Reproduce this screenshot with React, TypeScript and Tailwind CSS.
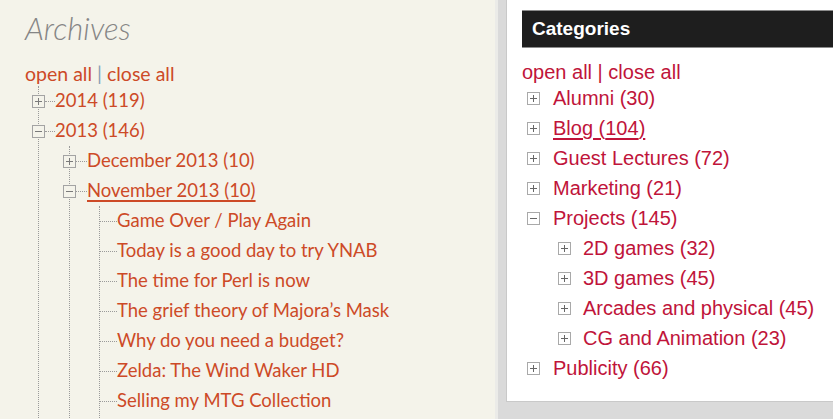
import React from 'react';

const leftLink = 'text-[#cd4a27]';
const rightLink = 'text-[#c0143a]';

const ToggleBox = ({ open, border, sign, bg }: { open?: boolean; border: string; sign: string; bg: string }) => (
  <svg width="13" height="13" viewBox="0 0 13 13" className="shrink-0">
    <rect x="0.5" y="0.5" width="12" height="12" fill={bg} stroke={border} />
    <line x1="3" y1="6.5" x2="10" y2="6.5" stroke={sign} />
    {!open && <line x1="6.5" y1="3" x2="6.5" y2="10" stroke={sign} />}
  </svg>
);

const novemberPosts = [
  'Game Over / Play Again',
  'Today is a good day to try YNAB',
  'The time for Perl is now',
  'The grief theory of Majora’s Mask',
  'Why do you need a budget?',
  'Zelda: The Wind Waker HD',
  'Selling my MTG Collection',
];

const categories = [
  { name: 'Alumni', count: 30 },
  { name: 'Blog', count: 104, hover: true },
  { name: 'Guest Lectures', count: 72 },
  { name: 'Marketing', count: 21 },
  { name: 'Projects', count: 145, open: true },
  { name: '2D games', count: 32, sub: true },
  { name: '3D games', count: 45, sub: true },
  { name: 'Arcades and physical', count: 45, sub: true },
  { name: 'CG and Animation', count: 23, sub: true },
  { name: 'Publicity', count: 66 },
];

const LeftBox = ({ open }: { open?: boolean }) => (
  <ToggleBox open={open} border="#a3a3a3" sign="#7a7a7a" bg="#f4f3ea" />
);

const Archives = () => (
  <div className="w-[495px] shrink-0 bg-[#f4f3ea] pl-[25px] pt-[9px]" style={{ fontFamily: 'Lato, "Open Sans", sans-serif' }}>
    <h2 className="text-[31px] leading-[38px] font-light italic text-[#858585]">Archives</h2>
    <div className={`mt-[15px] text-[19.5px] leading-[24px] ${leftLink}`}>
      open all <span className="text-[#8aa0b4]">|</span> close all
    </div>
    <ul className="ml-[13px] border-l border-dotted border-[#9a9a9a] text-[18.5px]">
      <li className="-ml-[7px]">
        <div className="flex h-[30px] items-center">
          <LeftBox />
          <span className="w-[10px] border-t border-dotted border-[#9a9a9a]" />
          <span className={leftLink}>2014 (119)</span>
        </div>
      </li>
      <li className="-ml-[7px]">
        <div className="flex h-[30px] items-center">
          <LeftBox open />
          <span className="w-[10px] border-t border-dotted border-[#9a9a9a]" />
          <span className={leftLink}>2013 (146)</span>
        </div>
        <ul className="ml-[37px] border-l border-dotted border-[#9a9a9a]">
          <li className="-ml-[7px]">
            <div className="flex h-[30px] items-center">
              <LeftBox />
              <span className="w-[11px] border-t border-dotted border-[#9a9a9a]" />
              <span className={leftLink}>December 2013 (10)</span>
            </div>
          </li>
          <li className="-ml-[7px]">
            <div className="flex h-[30px] items-center">
              <LeftBox open />
              <span className="w-[11px] border-t border-dotted border-[#9a9a9a]" />
              <span className={`${leftLink} underline decoration-[1.5px] underline-offset-[3px]`}>November 2013 (10)</span>
            </div>
            <ul className="ml-[36px] border-l border-dotted border-[#9a9a9a] pb-[40px]">
              {novemberPosts.map((post) => (
                <li key={post} className="flex h-[30px] items-center">
                  <span className="w-[17px] border-t border-dotted border-[#9a9a9a]" />
                  <span className={leftLink}>{post}</span>
                </li>
              ))}
            </ul>
          </li>
        </ul>
      </li>
    </ul>
  </div>
);

const Categories = () => (
  <div className="flex-1 border-l-[3px] border-[#ebebe8] bg-[#dadada] pl-[8px]">
    <div
      className="h-[402px] border-b border-l border-[#c9c9c9] bg-white pl-[15px] pt-[10px]"
      style={{ fontFamily: '"Liberation Sans", Arial, sans-serif' }}
    >
      <div className="flex h-[38px] items-center border-y border-[#8c8c8c] bg-[#1e1e1e] pl-[10px] text-[19px] font-bold text-white">
        Categories
      </div>
      <div className={`mt-[14px] text-[20px] leading-[21px] ${rightLink}`}>open all | close all</div>
      <ul className="text-[20px]">
        {categories.map((c) => (
          <li key={c.name} className={`flex h-[30px] items-center ${c.sub ? 'pl-[36px] gap-[12px]' : 'pl-[5px] gap-[13px]'}`}>
            <ToggleBox open={c.open} border="#a9a9a9" sign="#666" bg="#fff" />
            <span className={`${rightLink} ${c.hover ? 'underline decoration-[1.5px] underline-offset-[3px]' : ''}`}>
              {c.name} ({c.count})
            </span>
          </li>
        ))}
      </ul>
    </div>
  </div>
);

export default function App() {
  return (
    <div className="flex h-[419px] w-[833px] overflow-hidden">
      <Archives />
      <Categories />
    </div>
  );
}
